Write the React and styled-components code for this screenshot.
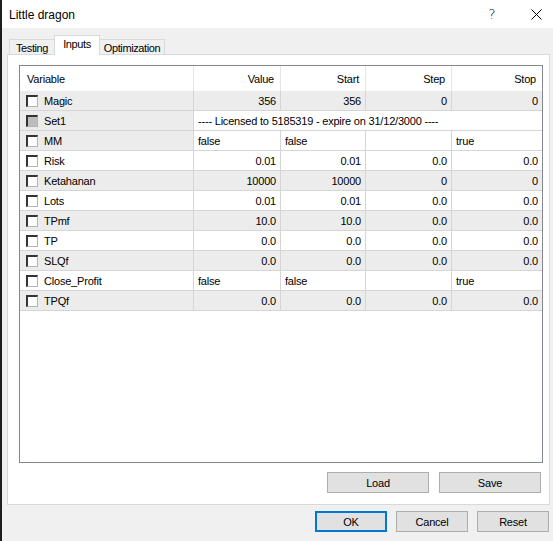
import React from 'react'
import styled, { createGlobalStyle, css } from 'styled-components'

const GlobalStyle = createGlobalStyle`
  html, body {
    margin: 0;
    padding: 0;
    background: #f0f0f0;
  }
  body {
    font-family: 'Liberation Sans', Arial, sans-serif;
    font-size: 11px;
    color: #000;
  }
`

const COLS = '174px 87px 85px 86px 1fr'

const Window = styled.div`
  width: 553px;
  height: 541px;
  box-sizing: border-box;
  border-left: 2px solid #1e1e1e;
  background: #f0f0f0;
  display: flex;
  flex-direction: column;
`

const TitleBar = styled.div`
  height: 28px;
  background: #fff;
  display: flex;
  align-items: center;
  padding-left: 7px;
  flex-shrink: 0;
`

const TitleText = styled.div`
  flex: 1;
  font-size: 12px;
  padding-top: 1px;
`

const HelpGlyph = styled.div`
  width: 20px;
  text-align: center;
  font-size: 14px;
  font-family: 'DejaVu Sans', sans-serif;
  font-weight: 300;
  margin-right: 24px;
`

const CloseButton = styled.div`
  width: 20px;
  margin-right: 7px;
  display: flex;
  justify-content: center;
`

const TabStrip = styled.div`
  display: flex;
  align-items: flex-end;
  margin: 7px 0 0 7px;
  height: 19px;
  position: relative;
  z-index: 1;
  letter-spacing: -0.4px;
`

const Tab = styled.div`
  box-sizing: border-box;
  width: ${p => p.$w}px;
  height: 15px;
  border: 1px solid #d9d9d9;
  border-bottom: none;
  margin-left: -1px;
  background: #f0f0f0;
  display: flex;
  justify-content: center;
  align-items: center;
  padding-top: 2px;
  ${p => p.$active && css`
    height: 20px;
    margin-bottom: -1px;
    background: #fff;
    align-items: flex-start;
    padding-top: 2px;
  `}
  &:first-child { margin-left: 0; }
`

const Panel = styled.div`
  box-sizing: border-box;
  height: 451px;
  margin: 0 3px 0 5px;
  background: #fff;
  border: 1px solid #d9d9d9;
  padding: 10px 6px 11px 11px;
  display: flex;
  flex-direction: column;
`

const Grid = styled.div`
  flex: 1;
  border: 1px solid #828790;
  background: #fff;
  letter-spacing: -0.2px;
`

const Row = styled.div`
  display: grid;
  grid-template-columns: ${COLS};
  height: ${p => (p.$header ? 25 : 20)}px;
  box-sizing: border-box;
  border-bottom: ${p => (p.$header ? 'none' : '1px solid #d5d5d5')};
`

const Cell = styled.div`
  box-sizing: border-box;
  display: flex;
  align-items: center;
  justify-content: ${p => (p.$right ? 'flex-end' : 'flex-start')};
  padding: 0 ${p => (p.$header ? 6 : 4)}px 0 ${p => (p.$header ? 7 : 4)}px;
  background: ${p => (p.$grey ? '#ececec' : '#fff')};
  border-right: 1px solid ${p => (p.$header ? '#e5e5e5' : '#d5d5d5')};
  grid-column: ${p => p.$span || 'auto'};
  white-space: nowrap;
  overflow: hidden;
  &:last-child { border-right: none; }
`

const VarCell = styled(Cell)`
  padding-left: 6px;
  gap: 6px;
`

const Check = styled.span`
  box-sizing: border-box;
  width: 12px;
  height: 12px;
  flex-shrink: 0;
  background: ${p => (p.$disabled ? '#bdbdbd' : '#fff')};
  border-style: solid;
  border-width: 2px 1px 1px 2px;
  border-color: #333 #b4b4b4 #b4b4b4 #333;
`

const ButtonRow = styled.div`
  display: flex;
  justify-content: flex-end;
  gap: ${p => p.$gap}px;
  margin: ${p => p.$margin};
  letter-spacing: -0.2px;
`

const Button = styled.div`
  box-sizing: border-box;
  width: ${p => p.$w}px;
  height: ${p => p.$h}px;
  background: #e1e1e1;
  border: 1px solid #adadad;
  display: flex;
  align-items: center;
  justify-content: center;
  ${p => p.$default && css`
    border: 2px solid #0078d7;
  `}
`

const rows = [
  { name: 'Magic', vals: ['356', '356', '0', '0'] },
  { name: 'Set1', text: '---- Licensed to 5185319 - expire on 31/12/3000 ----', disabled: true },
  { name: 'MM', vals: ['false', 'false', '', 'true'], left: true },
  { name: 'Risk', vals: ['0.01', '0.01', '0.0', '0.0'] },
  { name: 'Ketahanan', vals: ['10000', '10000', '0', '0'] },
  { name: 'Lots', vals: ['0.01', '0.01', '0.0', '0.0'] },
  { name: 'TPmf', vals: ['10.0', '10.0', '0.0', '0.0'] },
  { name: 'TP', vals: ['0.0', '0.0', '0.0', '0.0'] },
  { name: 'SLQf', vals: ['0.0', '0.0', '0.0', '0.0'] },
  { name: 'Close_Profit', vals: ['false', 'false', '', 'true'], left: true },
  { name: 'TPQf', vals: ['0.0', '0.0', '0.0', '0.0'] },
]

const CloseIcon = () => (
  <svg width="11" height="11" viewBox="0 0 11 11">
    <path d="M0.5 0.5 L10.5 10.5 M10.5 0.5 L0.5 10.5" stroke="#000" strokeWidth="1" fill="none" />
  </svg>
)

export default function App() {
  return (
    <>
      <GlobalStyle />
      <Window>
        <TitleBar>
          <TitleText>Little dragon</TitleText>
          <HelpGlyph>?</HelpGlyph>
          <CloseButton><CloseIcon /></CloseButton>
        </TitleBar>

        <TabStrip>
          <Tab $w={46}>Testing</Tab>
          <Tab $w={46} $active>Inputs</Tab>
          <Tab $w={66}>Optimization</Tab>
        </TabStrip>

        <Panel>
          <Grid>
            <Row $header>
              <Cell $header>Variable</Cell>
              <Cell $header $right>Value</Cell>
              <Cell $header $right>Start</Cell>
              <Cell $header $right>Step</Cell>
              <Cell $header $right>Stop</Cell>
            </Row>
            {rows.map((r, i) => {
              const grey = i % 2 === 0
              return (
                <Row key={r.name}>
                  <VarCell $grey={grey || r.disabled}>
                    <Check $disabled={r.disabled} />
                    {r.name}
                  </VarCell>
                  {r.text ? (
                    <Cell $span="2 / 6">{r.text}</Cell>
                  ) : (
                    r.vals.map((v, j) => (
                      <Cell key={j} $right={!r.left} $grey={grey && !r.left}>{v}</Cell>
                    ))
                  )}
                </Row>
              )
            })}
          </Grid>
          <ButtonRow $gap={10} $margin="9px 2px 0 0">
            <Button $w={102} $h={21}>Load</Button>
            <Button $w={102} $h={21}>Save</Button>
          </ButtonRow>
        </Panel>

        <ButtonRow $gap={9} $margin="6px 4px 0 0">
          <Button $w={72} $h={21} $default>OK</Button>
          <Button $w={72} $h={21}>Cancel</Button>
          <Button $w={72} $h={21}>Reset</Button>
        </ButtonRow>
      </Window>
    </>
  )
}
